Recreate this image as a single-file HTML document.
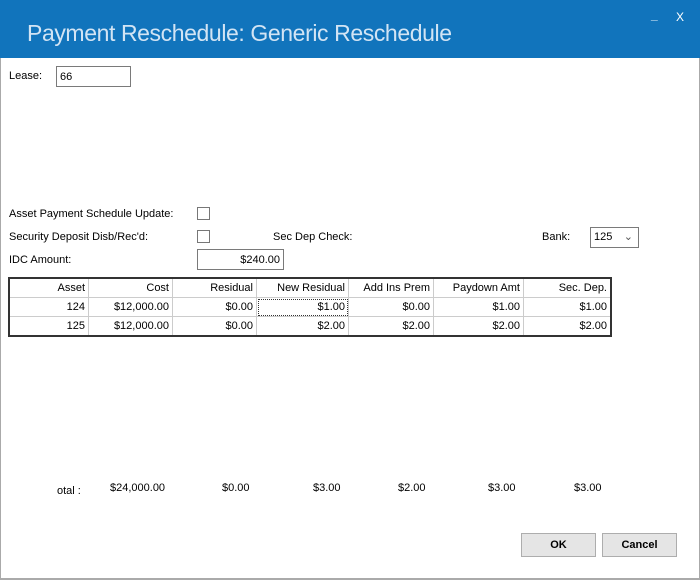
<!DOCTYPE html><html><head><style>
body{margin:0;width:700px;height:580px;overflow:hidden;background:#fff;font-family:"Liberation Sans",sans-serif;font-size:11px;color:#000;position:relative}
.a{position:absolute;white-space:nowrap}
.title{left:0;top:0;width:700px;height:58px;background:#1174bc}
.box{position:absolute;border:1px solid #7a7a7a;background:#fff;box-sizing:border-box}
.cb{position:absolute;width:13px;height:13px;border:1px solid #777;box-sizing:border-box}
table{position:absolute;left:8px;top:277px;border-collapse:collapse;border:2px solid #333}
td{border:1px solid #ccc;text-align:right;padding:0 3px;height:18px;font-size:11px}
.btn{position:absolute;width:75px;height:24px;background:#e5e5e5;border:1px solid #adadad;box-sizing:border-box;text-align:center;line-height:22px;font-weight:bold}
</style></head><body>
<div class="a title"></div>
<div class="a" style="left:27px;top:20px;font-size:23px;color:#d2e4f4;letter-spacing:-0.4px">Payment Reschedule: Generic Reschedule</div>
<div class="a" style="left:651px;top:8px;color:#fff;font-size:12px;font-weight:bold">_</div>
<div class="a" style="left:676px;top:10px;color:#fff;font-size:12px">X</div>
<div class="a" style="left:0;top:58px;width:1px;height:522px;background:#aaa"></div>
<div class="a" style="left:699px;top:58px;width:1px;height:522px;background:#aaa"></div>
<div class="a" style="left:0;top:578px;width:700px;height:2px;background:#aaa"></div>
<div class="a" style="left:9px;top:70px">Lease:</div>
<div class="box" style="left:56px;top:66px;width:75px;height:21px;padding:4px 3px">66</div>
<div class="a" style="left:9px;top:208px">Asset Payment Schedule Update:</div>
<div class="cb" style="left:197px;top:207px"></div>
<div class="a" style="left:9px;top:231px">Security Deposit Disb/Rec'd:</div>
<div class="cb" style="left:197px;top:230px"></div>
<div class="a" style="left:273px;top:231px">Sec Dep Check:</div>
<div class="a" style="left:542px;top:231px">Bank:</div>
<div class="box" style="left:590px;top:227px;width:49px;height:21px;padding:3px 3px">125<span style="position:absolute;right:5px;top:2px;color:#555">&#8964;</span></div>
<div class="a" style="left:9px;top:254px">IDC Amount:</div>
<div class="box" style="left:197px;top:249px;width:87px;height:21px;padding:4px 3px;text-align:right">$240.00</div>
<table>
<tr><td style="width:72px">Asset</td><td style="width:77px">Cost</td><td style="width:77px">Residual</td><td style="width:85px">New Residual</td><td style="width:78px">Add Ins Prem</td><td style="width:83px">Paydown Amt</td><td style="width:80px">Sec. Dep.</td></tr>
<tr><td>124</td><td>$12,000.00</td><td>$0.00</td><td style="outline:1px dotted #333;outline-offset:-2px">$1.00</td><td>$0.00</td><td>$1.00</td><td>$1.00</td></tr>
<tr><td>125</td><td>$12,000.00</td><td>$0.00</td><td>$2.00</td><td>$2.00</td><td>$2.00</td><td>$2.00</td></tr>
</table>
<div class="a" style="left:57px;top:485px">otal :</div>
<div class="a" style="left:110px;top:482px">$24,000.00</div>
<div class="a" style="left:222px;top:482px">$0.00</div>
<div class="a" style="left:313px;top:482px">$3.00</div>
<div class="a" style="left:398px;top:482px">$2.00</div>
<div class="a" style="left:488px;top:482px">$3.00</div>
<div class="a" style="left:574px;top:482px">$3.00</div>
<div class="btn" style="left:521px;top:533px">OK</div>
<div class="btn" style="left:602px;top:533px">Cancel</div>
</body></html>
